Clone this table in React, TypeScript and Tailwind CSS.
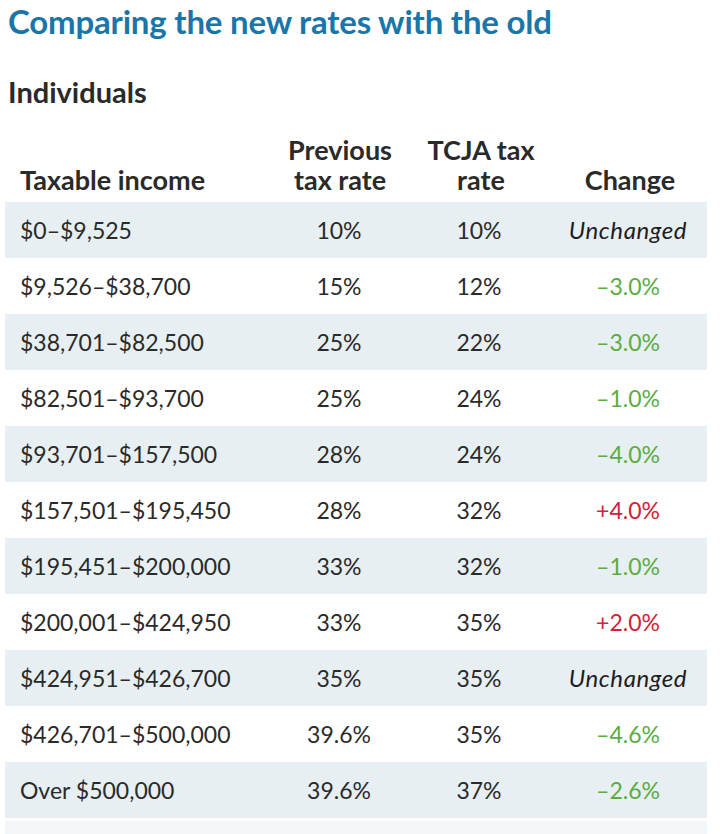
const rows: [string, string, string, string, "same" | "down" | "up"][] = [
  ["$0–$9,525", "10%", "10%", "Unchanged", "same"],
  ["$9,526–$38,700", "15%", "12%", "–3.0%", "down"],
  ["$38,701–$82,500", "25%", "22%", "–3.0%", "down"],
  ["$82,501–$93,700", "25%", "24%", "–1.0%", "down"],
  ["$93,701–$157,500", "28%", "24%", "–4.0%", "down"],
  ["$157,501–$195,450", "28%", "32%", "+4.0%", "up"],
  ["$195,451–$200,000", "33%", "32%", "–1.0%", "down"],
  ["$200,001–$424,950", "33%", "35%", "+2.0%", "up"],
  ["$424,951–$426,700", "35%", "35%", "Unchanged", "same"],
  ["$426,701–$500,000", "39.6%", "35%", "–4.6%", "down"],
  ["Over $500,000", "39.6%", "37%", "–2.6%", "down"],
];

export default function App() {
  return (
    <div className="w-[720px] h-[834px] overflow-hidden bg-white text-[#2a2a2a] font-['Lato',sans-serif]">
      <h1 className="pl-[8px] pt-[1px] text-[33px] leading-[40px] font-bold text-[#1a76a9] tracking-[-0.2px]">
        Comparing the new rates with the old
      </h1>
      <h2 className="pl-[8px] mt-[34px] text-[29px] leading-[34px] font-bold">Individuals</h2>
      <div className="ml-[5px] w-[702px] mt-[26px]">
        <div className="grid grid-cols-[250px_168px_112px_1fr] items-end text-[27px] leading-[30px] font-bold pb-[7px]">
          <div className="pl-[15px]">Taxable income</div>
          <div className="text-center pl-[2px]">Previous<br />tax rate</div>
          <div className="text-center pl-[4px]">TCJA tax<br />rate</div>
          <div className="text-center pl-[18px]">Change</div>
        </div>
        {rows.map((r, i) => (
          <div
            key={r[0]}
            className={`grid grid-cols-[250px_168px_112px_1fr] items-center h-[56px] text-[23px] ${
              i % 2 === 0 ? "bg-[#e7eff3]" : ""
            }`}
          >
            <div className="pl-[15px]">{r[0]}</div>
            <div className="text-center">{r[1]}</div>
            <div className="text-center">{r[2]}</div>
            <div
              className={`text-center pl-[14px] ${
                r[4] === "same"
                  ? "italic text-[24px] tracking-[0.6px] text-[#1e1e1e]"
                  : r[4] === "down"
                    ? "text-[#5aac3f]"
                    : "text-[#d0233a]"
              }`}
            >
              {r[3]}
            </div>
          </div>
        ))}
        <div className="h-[15px] mt-[3px] bg-[#f3f6f8]" />
      </div>
    </div>
  );
}
